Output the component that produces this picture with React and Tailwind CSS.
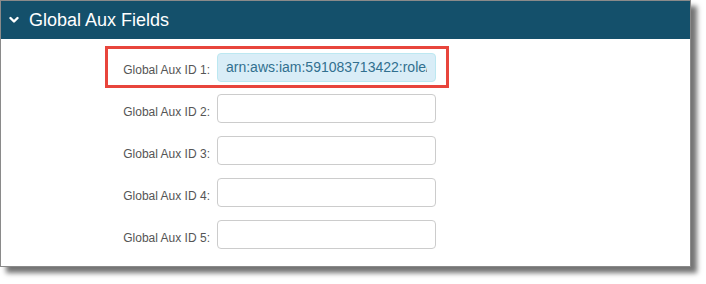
import { useState } from "react";

const rows = [
  { id: 1, value: "arn:aws:iam:591083713422:role/" },
  { id: 2, value: "" },
  { id: 3, value: "" },
  { id: 4, value: "" },
  { id: 5, value: "" },
];

function Row({ row }) {
  const filled = row.value !== "";
  return (
    <div className="flex items-center h-[29px]">
      <label className="w-[98px] pt-[6px] pr-[7px] text-right text-[12px] text-[#555555] whitespace-nowrap">
        Global Aux ID {row.id}:
      </label>
      <input
        type="text"
        defaultValue={row.value}
        className={
          filled
            ? "w-[219px] h-[29px] px-[8px] rounded-[4px] border border-[#bce8f1] bg-[#d9edf7] text-[14px] text-[#31708f] outline-none"
            : "w-[219px] h-[29px] px-[8px] rounded-[4px] border border-[#cccccc] bg-white text-[14px] text-[#555555] outline-none"
        }
      />
    </div>
  );
}

export default function App() {
  const [open, setOpen] = useState(true);

  return (
    <div className="w-[706px] h-[284px] bg-white font-['Liberation_Sans',Arial,sans-serif]">
      <div className="w-[691px] h-[267px] border border-[#8a8a8a] bg-white shadow-[6px_6px_5px_rgba(0,0,0,0.55)]">
        {/* Header */}
        <button
          onClick={() => setOpen(!open)}
          className="w-full h-[38px] bg-[#14506b] flex items-center pl-[8px] text-white text-[18px]"
        >
          <svg className="w-[10px] h-[10px] mr-[10px]" viewBox="0 0 10 10">
            <path
              d="M1.5 3 L5 6.5 L8.5 3"
              fill="none"
              stroke="white"
              strokeWidth="2.4"
              strokeLinecap="round"
              strokeLinejoin="round"
            />
          </svg>
          Global Aux Fields
        </button>

        {open && (
          <div className="pt-[7px] pl-[104px]">
            {/* Highlighted first row */}
            <div className="w-[344px] h-[42px] border-[3px] border-[#e8453c] flex items-center pl-[11px]">
              <Row row={rows[0]} />
            </div>
            <div className="flex flex-col gap-[13px] pt-[6px] pl-[14px]">
              {rows.slice(1).map((row) => (
                <Row key={row.id} row={row} />
              ))}
            </div>
          </div>
        )}
      </div>
    </div>
  );
}
